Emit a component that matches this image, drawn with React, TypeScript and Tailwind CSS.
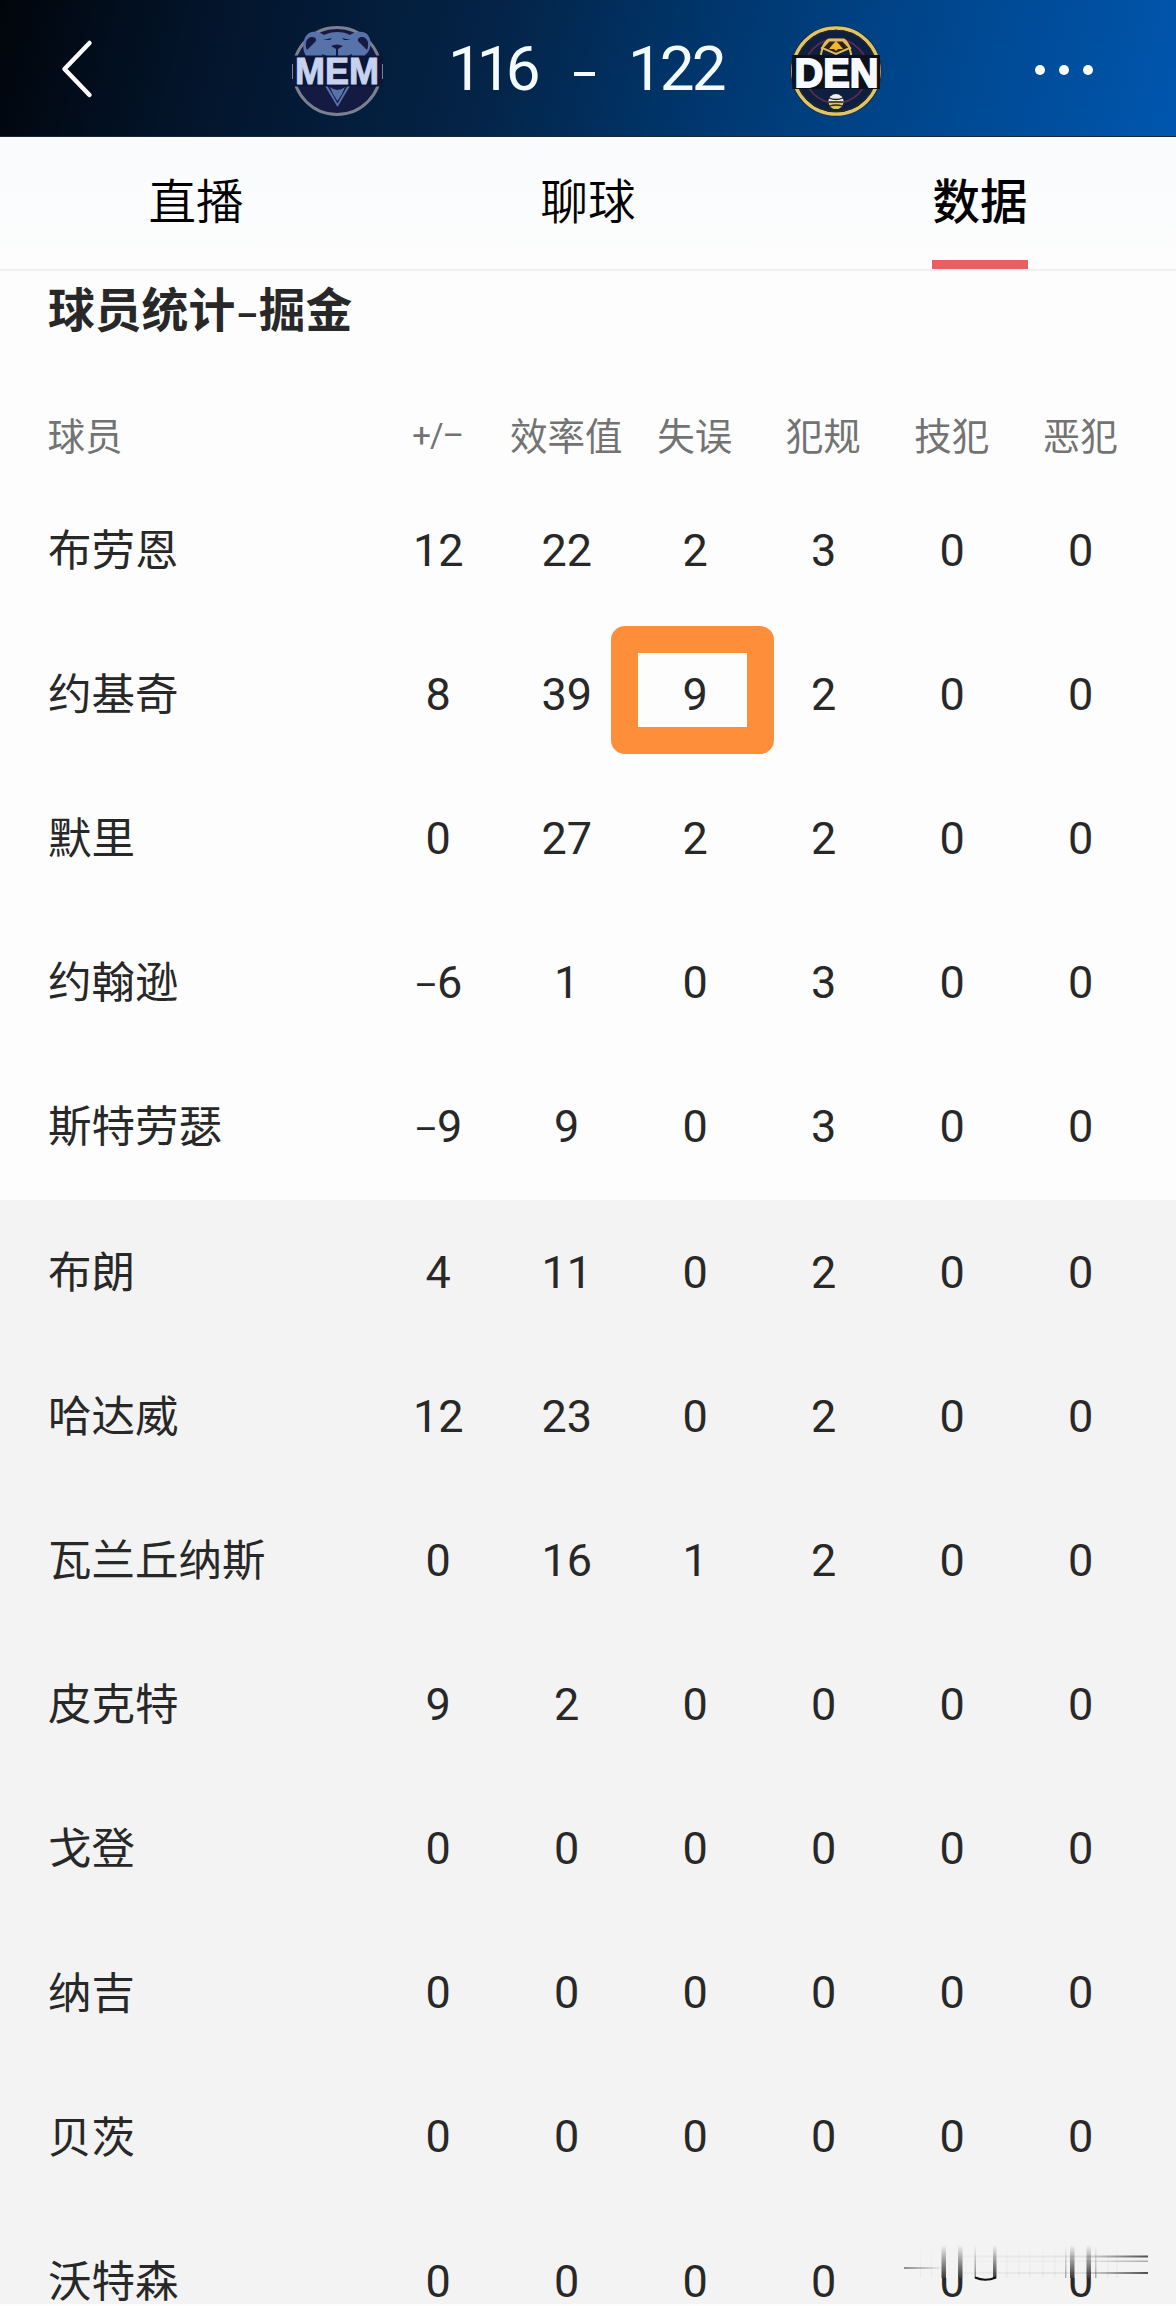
import { clsx } from "clsx";

type Player = { name: string; stats: string[] };

const COLUMNS = ["+/–", "效率值", "失误", "犯规", "技犯", "恶犯"];

const STARTERS: Player[] = [
  { name: "布劳恩",   stats: ["12", "22", "2", "3", "0", "0"] },
  { name: "约基奇",   stats: ["8", "39", "9", "2", "0", "0"] },
  { name: "默里",     stats: ["0", "27", "2", "2", "0", "0"] },
  { name: "约翰逊",   stats: ["–6", "1", "0", "3", "0", "0"] },
  { name: "斯特劳瑟", stats: ["–9", "9", "0", "3", "0", "0"] },
];

const BENCH: Player[] = [
  { name: "布朗",       stats: ["4", "11", "0", "2", "0", "0"] },
  { name: "哈达威",     stats: ["12", "23", "0", "2", "0", "0"] },
  { name: "瓦兰丘纳斯", stats: ["0", "16", "1", "2", "0", "0"] },
  { name: "皮克特",     stats: ["9", "2", "0", "0", "0", "0"] },
  { name: "戈登",       stats: ["0", "0", "0", "0", "0", "0"] },
  { name: "纳吉",       stats: ["0", "0", "0", "0", "0", "0"] },
  { name: "贝茨",       stats: ["0", "0", "0", "0", "0", "0"] },
  { name: "沃特森",     stats: ["0", "0", "0", "0", "0", "0"] },
];

const TABS = ["直播", "聊球", "数据"];

function GrizzliesLogo() {
  return (
    <svg viewBox="0 0 100 100" className="size-[100px]">
      <circle cx="50" cy="51" r="43.500" fill="#151a42" stroke="#7b8190" strokeWidth="3" />
      {/* bear head */}
      <path
        d="M20 37 C14 30 15 14 25 12 C30 11 34 13 37 15 C45 11 56 11 63 15 C67 12 75 10 80 14 C86 20 84 31 78 35 L80 43 L73 39 L74 45 L26 45 L27 39 L21 43 Z"
        fill="#5873aa"
      />
      <path d="M20 30 C17 23 20 16 26 17 C30 18 30 21 27 23 Z M80 30 C83 23 80 16 74 17 C70 18 70 21 73 23 Z" fill="#151a42" />
      <path d="M36 20 L45 18 L43 20 Z M64 20 L55 18 L57 20 Z M37 26 L44 24 M63 26 L56 24 M44 26 Q50 23 56 26 L51 29 V37 L49 37 V29 Z" fill="#151a42" />
      <path d="M35 34 L46 39 L45 45 L36 41 Z M65 34 L54 39 L55 45 L64 41 Z" fill="#151a42" />
      <path d="M38 36 L44 39 L40 39 Z M62 36 L56 39 L60 39 Z" fill="#d6c354" />
      {/* jaw */}
      <path d="M38 66 H63 L50.500 87 Z" fill="#5873aa" />
      <path d="M40.500 66 H60.500 L50.500 83.500 Z" fill="#151a42" />
      <path d="M43 67 Q50.500 73 58 67 L55 74 L50.500 81 L46 74 Z" fill="#5873aa" />
      <rect x="4" y="35.500" width="92" height="31" fill="#0b1638" />
      <path d="M5.500 44 V59 M95.500 44 V59" stroke="#7b8190" strokeWidth="1" />
      <text
        x="50" y="64" textAnchor="middle" textLength="84" lengthAdjust="spacingAndGlyphs"
        fontSize="37" fontWeight="700" fontFamily="Liberation Sans, sans-serif"
        fill="#c6d2ee" stroke="#c6d2ee" strokeWidth="1"
      >
        MEM
      </text>
    </svg>
  );
}

function NuggetsLogo() {
  return (
    <svg viewBox="0 0 100 100" className="size-[100px]">
      <circle cx="50" cy="51" r="45.500" fill="#202020" />
      <circle cx="50" cy="51" r="43" fill="#0d2040" stroke="#dfc56a" strokeWidth="3.500" />
      <circle cx="50" cy="51" r="40.500" fill="none" stroke="#232629" strokeWidth="1.500" />
      <circle cx="50" cy="51" r="32" fill="none" stroke="#5b2850" strokeWidth="2" />
      <path d="M35 40 C34 31 38 22 43 19.500 H58 C62 22 66 31 65 40" fill="none" stroke="#e5bd58" strokeWidth="2" />
      <path d="M36 28 L43 20.500 H57 L64 28 L50 34 Z" fill="#2a241d" stroke="#e5bd58" strokeWidth="2" />
      <path d="M50 21 L53 24 L57 29 H52 L50 31 L48 29 H43 L47 24 Z" fill="#f0b72f" />
      <circle cx="50" cy="81.500" r="7.500" fill="#f1efe8" />
      <path d="M43 81 H57 Q57 89 50 89 Q43 89 43 81" fill="#e2bd5b" />
      <path d="M43 78 Q50 81 57 78 M42.500 82 H57.500 M43.500 86 Q50 84 56.500 86" fill="none" stroke="#232629" strokeWidth="1.300" />
      <rect x="6" y="35" width="88" height="34" fill="#0b111d" />
      <text
        x="50.500" y="66.500" textAnchor="middle" textLength="84" lengthAdjust="spacingAndGlyphs"
        fontSize="40" fontWeight="700" fontFamily="Liberation Sans, sans-serif"
        fill="#f6f9ff" stroke="#f6f9ff" strokeWidth="1.800"
      >
        DEN
      </text>
    </svg>
  );
}

function ScoreHeader() {
  return (
    <header className="flex h-[137px] items-center border-b border-[#1c2633] bg-[linear-gradient(105deg,#01050b_0%,#03142a_17%,#042448_42%,#003468_57%,#00458b_76%,#0056ae_100%)] pt-1 text-[#f4fbff]">
      <svg viewBox="0 0 40 64" className="ml-[58px] h-16 w-10" fill="none" stroke="#fff" strokeWidth="4.500" strokeLinecap="round" strokeLinejoin="round">
        <path d="M31.500 5 L6.500 31 L31.500 57" />
      </svg>
      <div className="ml-[189px]">
        <GrizzliesLogo />
      </div>
      <div className="ml-[61px] flex w-[278px] items-center justify-between font-[Roboto,sans-serif] text-[62px] leading-none">
        <span className="w-[90px] -translate-y-px tracking-[-6px]">116</span>
        <span className="mt-[7px] h-1 w-[21px] translate-x-px bg-[#f4fbff]" />
        <span className="w-[98px] -translate-y-px tracking-[-3px]">122</span>
      </div>
      <div className="ml-[60px]">
        <NuggetsLogo />
      </div>
      <div className="ml-[149px] flex gap-[14px]">
        {[0, 1, 2].map((i) => <span key={i} className="size-[10px] rounded-full bg-white" />)}
      </div>
    </header>
  );
}

function TabBar({ active }: { active: string }) {
  return (
    <nav className="grid h-[134px] grid-cols-3 border-b-2 border-[#eff1f1] bg-linear-to-b from-[#f9fbfd] to-[#fdfdfd]">
      {TABS.map((tab) => (
        <button
          key={tab}
          className={clsx(
            "flex flex-col items-center justify-between pt-[27px] text-[47.500px] leading-[70px] text-black",
            tab === active ? "font-medium" : "font-[350]",
          )}
        >
          {tab}
          {tab === active && <span className="h-[9px] w-24 bg-[#e86060]" />}
        </button>
      ))}
    </nav>
  );
}

function PlayerRow({ player }: { player: Player }) {
  return (
    <div className="flex h-[144.150px] items-center pl-12 leading-none">
      <div className="w-[326px] pb-[5px] text-[43.500px] whitespace-nowrap">{player.name}</div>
      {player.stats.map((value, i) => (
        <div key={i} className="relative w-[128.500px] text-center font-[Roboto,sans-serif] text-[45px]">
          {value.startsWith("–") ? (
            <><span className="-mr-px text-[36px]">–</span>{value.slice(1)}</>
          ) : value}
          {player.name === "约基奇" && i === 2 && (
            <span className="absolute top-1/2 left-1/2 h-32 w-[163px] -translate-x-[84px] -translate-y-[68px] rounded-[14px] border-[27px] border-[#ff8e3a]" />
          )}
        </div>
      ))}
    </div>
  );
}

/* Smeared corner mark over the last row */
function CornerSmear() {
  return (
    <svg viewBox="0 0 250 38" className="absolute top-[2243px] left-[902px] h-[38px] w-[250px]">
      <defs>
        <linearGradient id="down" x1="0" y1="0" x2="0" y2="1">
          <stop offset="0" stopColor="#262626" stopOpacity="0" />
          <stop offset="1" stopColor="#262626" stopOpacity="0.900" />
        </linearGradient>
        <linearGradient id="right" x1="0" y1="0" x2="1" y2="0">
          <stop offset="0" stopColor="#262626" stopOpacity="0.030" />
          <stop offset="0.650" stopColor="#262626" stopOpacity="0.080" />
          <stop offset="1" stopColor="#262626" stopOpacity="0.800" />
        </linearGradient>
        <linearGradient id="left" x1="1" y1="0" x2="0" y2="0">
          <stop offset="0" stopColor="#262626" stopOpacity="0" />
          <stop offset="1" stopColor="#262626" stopOpacity="0.500" />
        </linearGradient>
      </defs>
      <rect width="250" height="35" fill="#f3f3f3" />
      <g fill="url(#down)">
        <rect x="39.500" y="2" width="4.500" height="33" />
        <rect x="56" y="2" width="4.500" height="33" />
        <rect x="72.500" y="2" width="1.500" height="33" opacity="0.600" />
        <rect x="91" y="2" width="3.500" height="33" />
        <rect x="163" y="2" width="1.500" height="33" opacity="0.400" />
        <rect x="168" y="2" width="4.500" height="33" />
        <rect x="184.500" y="2" width="4.500" height="33" />
        <rect x="193" y="2" width="1.500" height="33" opacity="0.400" />
        <g opacity="0.050">
          <rect x="18" y="2" width="1" height="33" />
          <rect x="29" y="2" width="1" height="33" />
          <rect x="104" y="2" width="1.500" height="33" />
          <rect x="116" y="2" width="1.500" height="33" />
          <rect x="127" y="2" width="1.500" height="33" />
          <rect x="140" y="2" width="1.500" height="33" />
          <rect x="152" y="2" width="1.500" height="33" />
          <rect x="205" y="2" width="1.500" height="33" />
          <rect x="214" y="2" width="1.500" height="33" />
        </g>
      </g>
      <rect x="2" y="24" width="40" height="2" fill="url(#left)" />
      <g fill="url(#right)">
        <rect x="60" y="12.500" width="186" height="2" />
        <rect x="60" y="17.500" width="186" height="1.500" opacity="0.450" />
        <rect x="60" y="29" width="186" height="2" />
      </g>
      <path d="M73 34.500 Q83 39 94 34.500" fill="none" stroke="#111" strokeWidth="2" />
    </svg>
  );
}

export default function App() {
  return (
    <div className="relative h-[2306px] w-[1176px] overflow-hidden bg-[#fdfdfd] font-['Noto_Sans_CJK_SC',sans-serif] text-[#282828]">
      <ScoreHeader />
      <TabBar active="数据" />

      <section className="h-[929px]">
        <h2 className="h-[81px] pt-px pl-12 text-[46.800px] leading-[70px] font-bold">
          球员统计<span className="mx-px font-[Roboto,sans-serif] text-[34px]">–</span>掘金
        </h2>
        <div className="flex h-[126px] items-center pt-[38px] pl-[47.500px] text-[37.500px] text-[#737373]">
          <div className="w-[326px]">球员</div>
          {COLUMNS.map((c, i) => (
            <div key={c} className={clsx("w-[128.500px] text-center whitespace-nowrap", i === 0 && "pt-1 font-[Roboto,sans-serif] text-[33px] tracking-[-1px]")}>
              {c}
            </div>
          ))}
        </div>
        {STARTERS.map((p) => <PlayerRow key={p.name} player={p} />)}
      </section>

      <section className="h-[1104px] overflow-hidden bg-[#f3f3f3]">
        {BENCH.map((p) => <PlayerRow key={p.name} player={p} />)}
      </section>

      <CornerSmear />
    </div>
  );
}
